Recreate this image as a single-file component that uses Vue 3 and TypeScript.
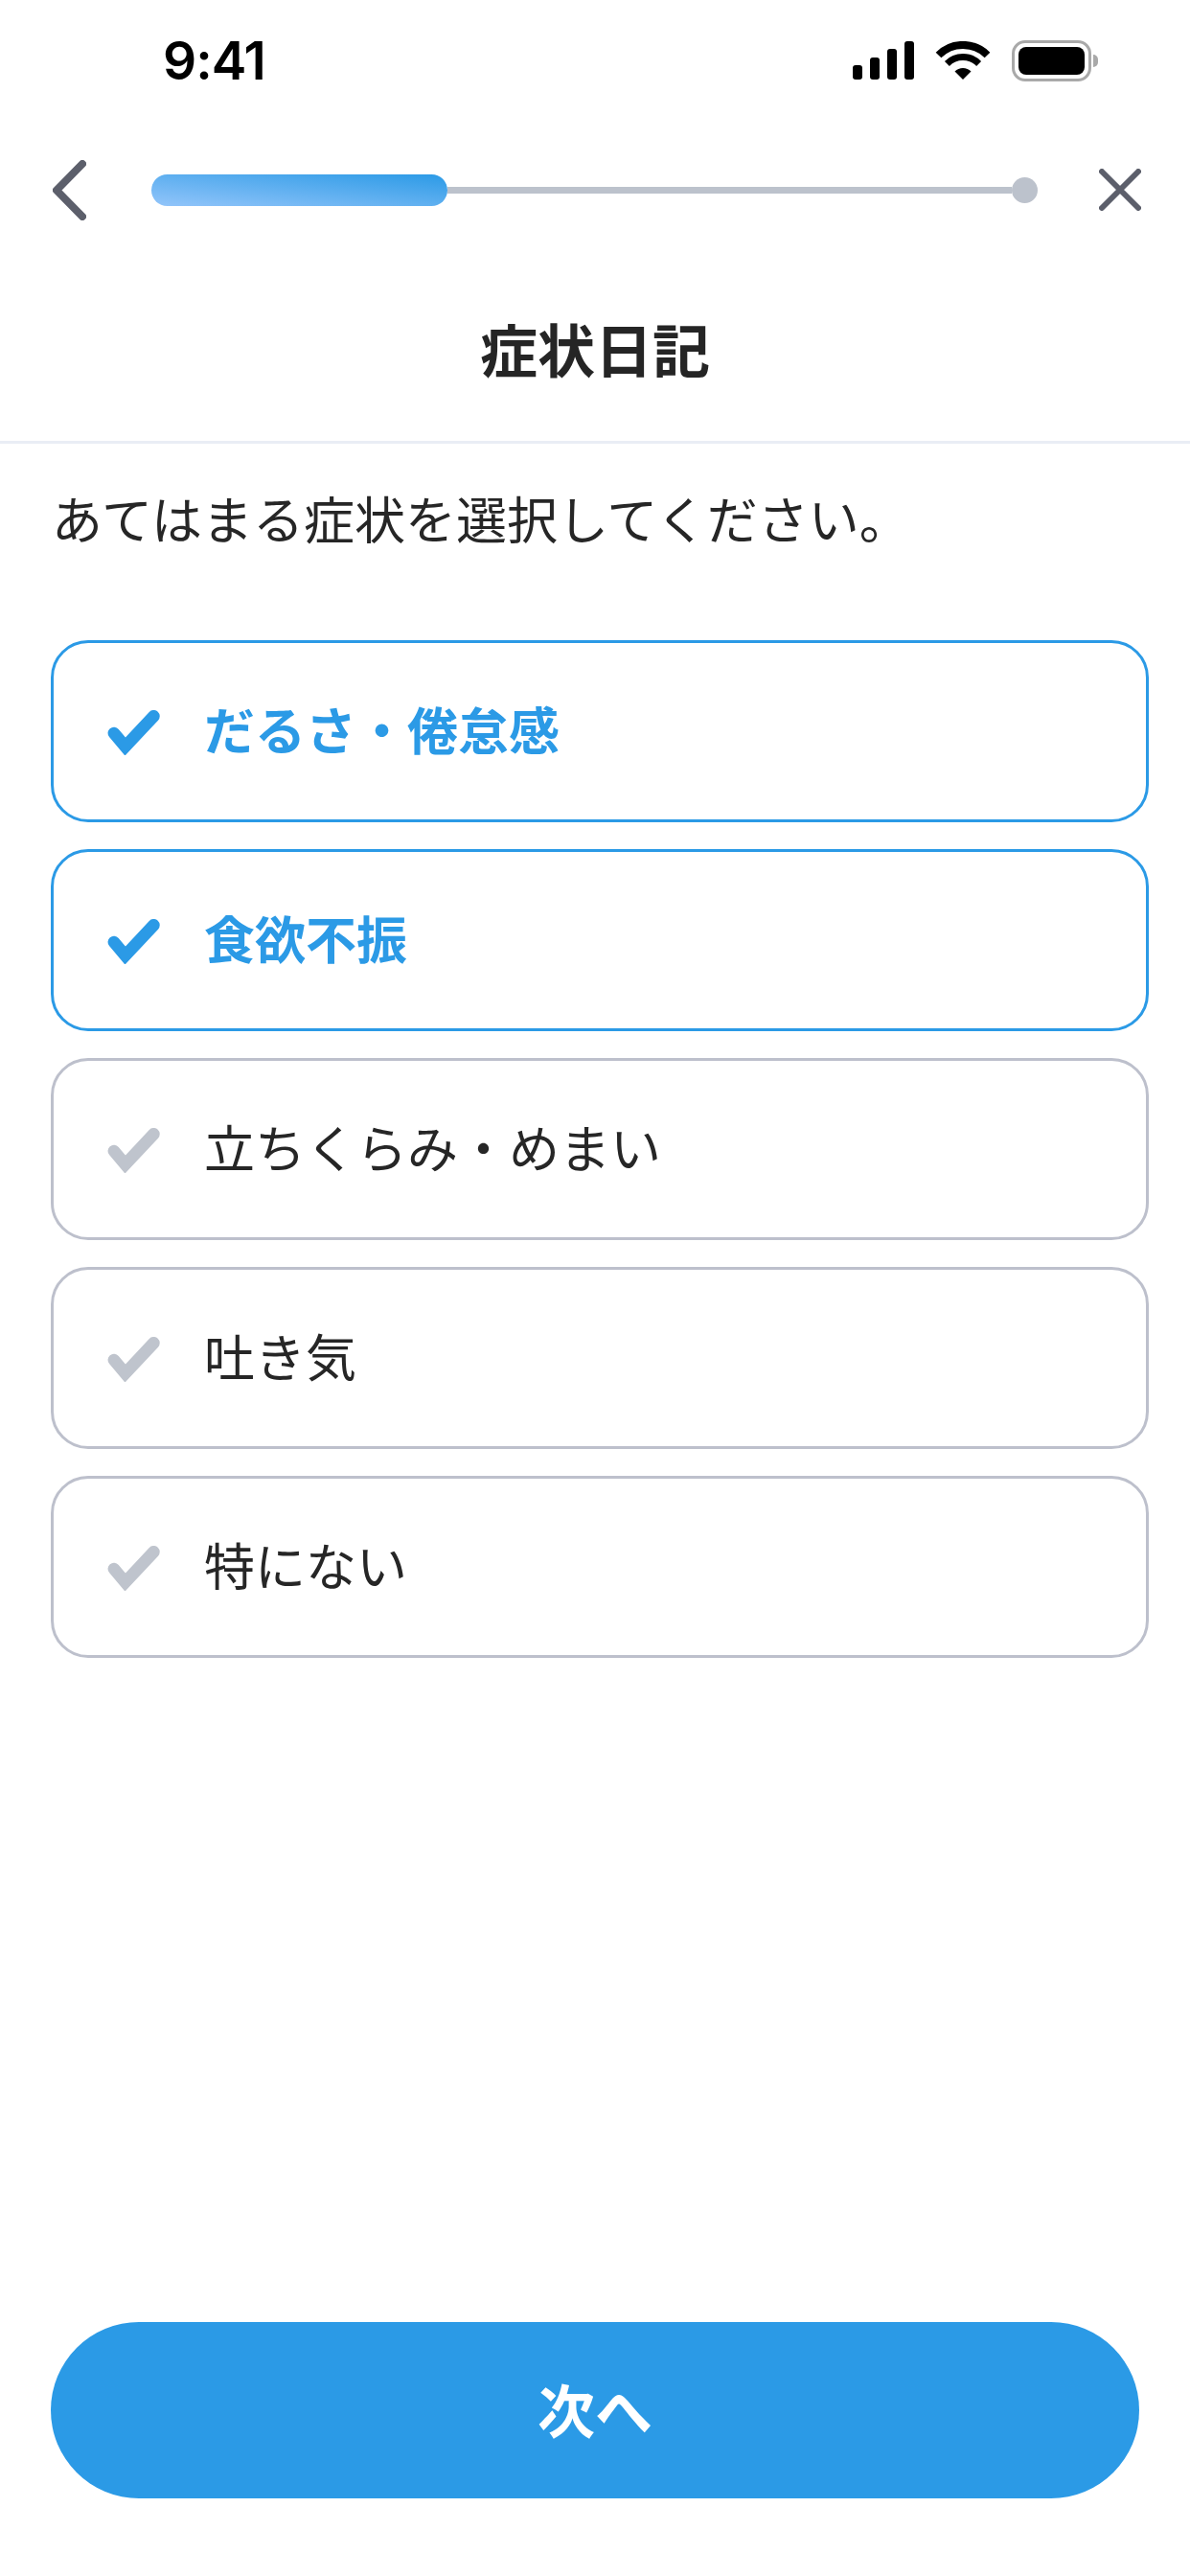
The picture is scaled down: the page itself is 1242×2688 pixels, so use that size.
<script setup lang="ts">
interface Symptom { label: string; selected: boolean }
const symptoms: Symptom[] = [
  { label: 'だるさ・倦怠感', selected: true },
  { label: '食欲不振', selected: true },
  { label: '立ちくらみ・めまい', selected: false },
  { label: '吐き気', selected: false },
  { label: '特にない', selected: false },
]
</script>

<template>
  <div class="page">
    <div class="status">
      <span class="time">9:41</span>
      <div class="status-icons">
        <svg width="64" height="40" viewBox="0 0 64 40" fill="#000">
          <rect x="0" y="25" width="10" height="15" rx="3" />
          <rect x="18" y="17" width="10" height="23" rx="3" />
          <rect x="36" y="8" width="10" height="32" rx="3" />
          <rect x="54" y="0" width="10" height="40" rx="3" />
        </svg>
        <svg width="58" height="40" viewBox="0 0 58 40" fill="none" stroke="#000">
          <path d="M3.5 14.5A36 36 0 0 1 54.5 14.5" stroke-width="8" />
          <path d="M12.4 23.4A23.5 23.5 0 0 1 45.6 23.4" stroke-width="7" />
          <path d="M29 40L20.5 31.5A12 12 0 0 1 37.5 31.5Z" fill="#000" stroke="none" />
        </svg>
        <div class="battery">
          <div class="battery-body"><div class="battery-level"></div></div>
          <div class="battery-nub"></div>
        </div>
      </div>
    </div>

    <div class="nav">
      <svg class="back" width="35" height="63" viewBox="0 0 35 63" fill="none" stroke="#5c5f6b" stroke-width="8" stroke-linecap="round" stroke-linejoin="round">
        <path d="M31 4L4 31.5L31 59" />
      </svg>
      <div class="progress">
        <div class="progress-fill"></div>
        <div class="progress-line"></div>
        <div class="progress-dot"></div>
      </div>
      <svg class="close" width="44" height="44" viewBox="0 0 44 44" fill="none" stroke="#5c5f6b" stroke-width="6" stroke-linecap="round">
        <path d="M3 3L41 41M41 3L3 41" />
      </svg>
    </div>

    <h1 class="title">症状日記</h1>

    <p class="prompt">あてはまる症状を選択してください。</p>

    <ul class="list">
      <li v-for="item in symptoms" :key="item.label" class="card" :class="{ on: item.selected }">
        <svg class="check" width="55" height="47" viewBox="0 0 55 47" fill="none" stroke="currentColor" stroke-width="12.7" stroke-linecap="round" stroke-linejoin="miter">
          <path d="M6.9 24L18.7 38L48.4 6.3" />
        </svg>
        <span class="label">{{ item.label }}</span>
      </li>
    </ul>

    <button class="next" type="button">次へ</button>
  </div>
</template>

<style scoped>
.page {
  width: 1242px;
  height: 2688px;
  background: #fff;
  display: flex;
  flex-direction: column;
  font-family: "Noto Sans CJK JP", "Noto Sans", sans-serif;
  color: #262626;
  overflow: hidden;
}
.status {
  height: 126px;
  flex: none;
  display: flex;
  align-items: center;
  justify-content: space-between;
  padding: 0 96px 0 170px;
}
.time {
  font-family: Inter, "Liberation Sans", sans-serif;
  font-weight: 600;
  font-size: 55px;
  line-height: 60px;
  letter-spacing: -1px;
  color: #000;
}
.status-icons {
  display: flex;
  align-items: center;
  gap: 22px;
}
.battery {
  display: flex;
  align-items: center;
  gap: 2px;
}
.battery-body {
  width: 83px;
  height: 43px;
  box-sizing: border-box;
  border: 3px solid #a9a9a9;
  border-radius: 14px;
  padding: 4px;
  display: flex;
}
.battery-level {
  flex: 1;
  background: #000;
  border-radius: 8px;
}
.battery-nub {
  width: 5px;
  height: 13px;
  background: #a9a9a9;
  border-radius: 0 6px 6px 0;
}
.nav {
  height: 144px;
  flex: none;
  display: flex;
  align-items: center;
  padding: 0 51px 0 55px;
}
.back { flex: none; }
.close { flex: none; margin-left: 64px; }
.progress {
  flex: 1;
  margin-left: 68px;
  display: flex;
  align-items: center;
}
.progress-fill {
  width: 309px;
  height: 33px;
  border-radius: 17px;
  background: linear-gradient(to top right, #93c5fa 0%, #2b9ae6 100%);
  flex: none;
}
.progress-line {
  flex: 1;
  height: 7px;
  background: #bcc2cc;
}
.progress-dot {
  width: 27px;
  height: 27px;
  border-radius: 50%;
  background: #bcc2cc;
  flex: none;
}
.title {
  margin: 0;
  box-sizing: border-box;
  height: 193px;
  padding-bottom: 6px;
  flex: none;
  display: flex;
  align-items: center;
  justify-content: center;
  font-size: 60px;
  font-weight: 700;
  color: #252525;
  border-bottom: 3px solid #e9edf5;
}
.prompt {
  margin: 0 0 45px;
  box-sizing: border-box;
  height: 160px;
  flex: none;
  display: flex;
  align-items: center;
  padding: 0 0 6px 54px;
  font-size: 53px;
  font-weight: 400;
}
.list {
  list-style: none;
  margin: 0;
  padding: 0 43px 0 53px;
  display: flex;
  flex-direction: column;
  gap: 28px;
}
.card {
  height: 190px;
  box-sizing: border-box;
  border: 3px solid #bdc0cc;
  border-radius: 39px;
  padding-left: 56px;
  display: flex;
  align-items: center;
  gap: 46px;
  color: #bfc4cd;
}
.card.on {
  border-color: #2b9ae6;
  color: #2b9ae6;
}
.check { flex: none; margin-top: 2px; }
.label {
  margin-bottom: 6px;
  font-size: 53px;
  font-weight: 400;
  color: #262626;
}
.on .label {
  font-weight: 700;
  color: #2b9ae6;
}
.next {
  margin: auto 53px 81px 53px;
  height: 184px;
  padding: 0 0 6px;
  flex: none;
  border: none;
  border-radius: 92px;
  background: #2b9ae6;
  color: #fff;
  font-family: inherit;
  font-size: 60px;
  font-weight: 700;
}
</style>
